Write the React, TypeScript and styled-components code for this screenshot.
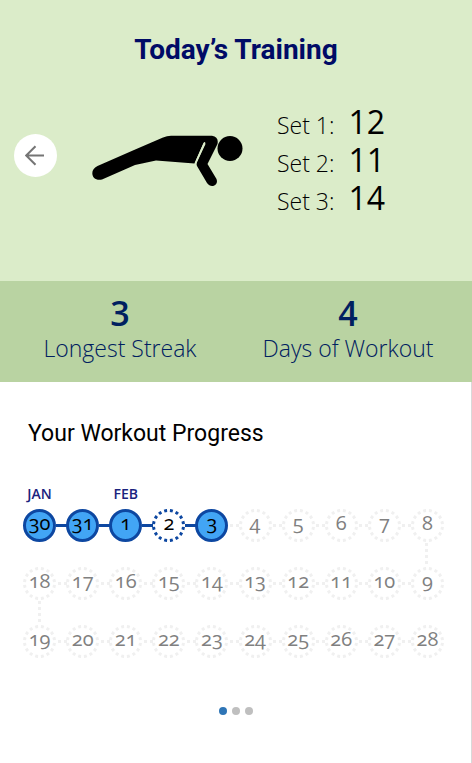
import React from 'react';
import styled, { createGlobalStyle } from 'styled-components';

type DayState = 'done' | 'missed' | 'upcoming';

interface Day {
  label: string;
  state: DayState;
  month?: string;
  next?: 'solid' | 'dotted';
  drop?: boolean;
}

const INK = '#0d47a1';
const FAINT = '#f0f0f0';

const GlobalStyle = createGlobalStyle`
  *, *::before, *::after { box-sizing: border-box; }
  body { margin: 0; background: #fff; color: #000; font-family: Roboto, sans-serif; }
  h1, h2, dl, dd, ol { margin: 0; padding: 0; }
  ol { list-style: none; }
`;

const Page = styled.div`
  display: flex;
  flex-direction: column;
  min-height: 100vh;
`;

const Hero = styled.header`
  padding: 32px 14px 64px;
  background: #dbecc9;
`;

const Title = styled.h1`
  font-size: 28px;
  line-height: 36px;
  font-weight: 700;
  text-align: center;
  color: #000b66;
`;

const Training = styled.div`
  display: flex;
  align-items: center;
  margin-top: 26px;
`;

const BackButton = styled.button`
  display: grid;
  place-items: center;
  flex: none;
  width: 43px;
  height: 43px;
  padding: 0;
  border: 0;
  border-radius: 50%;
  background: #fff;
  color: #757575;
  cursor: pointer;
`;

const Figure = styled.svg`
  margin: 10px 34px 0 35px;
  flex: none;
`;

const Sets = styled.dl`
  display: grid;
  grid-template-columns: auto auto;
  column-gap: 14px;
  grid-auto-rows: 38px;
  align-items: baseline;
  padding-top: 9px;
  font-family: 'Open Sans', sans-serif;
`;

const SetName = styled.dt`
  font-size: 23px;
  line-height: 38px;
  font-weight: 300;
`;

const SetCount = styled.dd`
  font-size: 32px;
  line-height: 38px;
`;

const Stats = styled.dl`
  display: grid;
  grid-template-columns: 1fr 1fr;
  padding: 11px 10px 19px 6px;
  background: #b9d3a2;
  color: #002060;
  font-family: 'Open Sans', sans-serif;
  text-align: center;
`;

const Stat = styled.div`
  display: flex;
  flex-direction: column-reverse;
`;

const StatLabel = styled.dt`
  font-size: 23px;
  line-height: 29px;
  font-weight: 300;
`;

const StatValue = styled.dd`
  font-size: 34px;
  line-height: 42px;
  font-weight: 600;
`;

const Progress = styled.main`
  flex: 1;
  padding: 36px 0 47px;
  border-right: 1px solid #d9d9d9;
`;

const ProgressTitle = styled.h2`
  padding-left: 28px;
  font-size: 23px;
  line-height: 32px;
  font-weight: 400;
`;

const Days = styled.ol`
  display: grid;
  grid-template-columns: repeat(10, 1fr);
  grid-auto-rows: 58px;
  margin: 46px 22px 0 18px;
`;

const Cell = styled.li`
  position: relative;
  display: grid;
  place-items: center;
`;

const Month = styled.span`
  position: absolute;
  top: -10px;
  left: 0;
  right: 0;
  text-align: center;
  font-family: 'Open Sans', sans-serif;
  font-size: 14px;
  line-height: 16px;
  font-weight: 600;
  color: #1a237e;
`;

const Ring = styled.svg`
  grid-area: 1 / 1;
  display: block;
`;

const DayNumber = styled.span<{ $state: DayState }>`
  grid-area: 1 / 1;
  z-index: 1;
  padding-bottom: 4px;
  font-family: 'Open Sans', sans-serif;
  font-variant-numeric: oldstyle-nums;
  font-size: 20px;
  line-height: 28px;
  color: ${(p) => (p.$state === 'upcoming' ? '#808080' : '#000')};
`;

const Link = styled.span<{ $kind: 'solid' | 'dotted' }>`
  position: absolute;
  left: calc(50% + 16px);
  width: calc(100% - 32px);
  top: calc(50% - 1px);
  height: 3px;
  background: ${(p) =>
    p.$kind === 'solid'
      ? INK
      : `repeating-linear-gradient(90deg, transparent 0 2px, ${FAINT} 2px 5px, transparent 5px 6px)`};
`;

const Drop = styled.span`
  position: absolute;
  top: calc(50% + 16px);
  height: calc(100% - 32px);
  left: calc(50% - 2px);
  width: 3px;
  background: repeating-linear-gradient(transparent 0 2px, ${FAINT} 2px 5px, transparent 5px 6px);
`;

const Pager = styled.nav`
  display: flex;
  justify-content: center;
  gap: 5px;
  margin-top: 37px;
`;

const Dot = styled.button<{ $active?: boolean }>`
  width: 8px;
  height: 8px;
  padding: 0;
  border: 0;
  border-radius: 50%;
  background: ${(p) => (p.$active ? '#2e75b6' : '#bfbfbf')};
`;

const done = (label: string, month?: string): Day => ({ label, state: 'done', month, next: 'solid' });
const upcoming = (n: number, last: boolean): Day => ({
  label: String(n),
  state: 'upcoming',
  next: last ? undefined : 'dotted',
  drop: n === 8 || n === 18,
});

const days: Day[] = [
  done('30', 'JAN'),
  done('31'),
  done('1', 'FEB'),
  { label: '2', state: 'missed', next: 'solid' },
  { label: '3', state: 'done', next: 'dotted' },
  ...[4, 5, 6, 7, 8].map((n) => upcoming(n, n === 8)),
  ...[18, 17, 16, 15, 14, 13, 12, 11, 10, 9].map((n) => upcoming(n, n === 9)),
  ...[19, 20, 21, 22, 23, 24, 25, 26, 27, 28].map((n) => upcoming(n, n === 28)),
];

const sets = [12, 11, 14];

function DayCell({ day }: { day: Day }) {
  const solid = day.state === 'done';
  return (
    <Cell>
      {day.month && <Month>{day.month}</Month>}
      {day.next && <Link $kind={day.next} />}
      {day.drop && <Drop />}
      <Ring width="33" height="33" viewBox="0 0 33 33" aria-hidden="true">
        <circle
          cx="16.5"
          cy="16.5"
          r="15"
          fill={solid ? '#42a5f5' : '#fff'}
          stroke={day.state === 'upcoming' ? FAINT : INK}
          strokeWidth="3"
          pathLength={solid ? undefined : 96}
          strokeDasharray={solid ? undefined : '3 3'}
          strokeDashoffset={-1.5}
        />
      </Ring>
      <DayNumber $state={day.state}>{day.label}</DayNumber>
    </Cell>
  );
}

export default function App() {
  return (
    <Page>
      <GlobalStyle />
      <Hero>
        <Title>Today’s Training</Title>
        <Training>
          <BackButton type="button" aria-label="Back">
            <svg width="21" height="21" viewBox="0 0 21 21" fill="none" stroke="currentColor" strokeWidth="2">
              <path d="M19 10.5H1.500M10.500 1.200L1.200 10.500L10.500 19.800" />
            </svg>
          </BackButton>
          <Figure width="151" height="52" viewBox="0 0 151 52" aria-label="Push-up" role="img">
            <path d="M5.5 31L42 15L71 2.5Q75 .8 79 .8H120Q127 2 125.500 9L115.500 29L124.500 44C127 50 119 54 115 48L105 31Q104 28.500 105.500 26L113.500 9Q112.500 7 111.300 8.500L102.500 28.500L64 25.500L43 30L10 44.500C0 47 -3.500 35 5.500 31Z" />
            <path d="M112.500 8L103.600 28" stroke="#dbecc9" strokeWidth="1.8" strokeLinecap="round" />
            <circle cx="138" cy="13.500" r="12.500" />
          </Figure>
          <Sets>
            {sets.map((count, i) => (
              <React.Fragment key={i}>
                <SetName>Set {i + 1}:</SetName>
                <SetCount>{count}</SetCount>
              </React.Fragment>
            ))}
          </Sets>
        </Training>
      </Hero>
      <Stats>
        <Stat>
          <StatLabel>Longest Streak</StatLabel>
          <StatValue>3</StatValue>
        </Stat>
        <Stat>
          <StatLabel>Days of Workout</StatLabel>
          <StatValue>4</StatValue>
        </Stat>
      </Stats>
      <Progress>
        <ProgressTitle>Your Workout Progress</ProgressTitle>
        <Days>
          {days.map((day) => (
            <DayCell key={day.label} day={day} />
          ))}
        </Days>
        <Pager aria-label="Progress pages">
          <Dot type="button" $active aria-label="Page 1" />
          <Dot type="button" aria-label="Page 2" />
          <Dot type="button" aria-label="Page 3" />
        </Pager>
      </Progress>
    </Page>
  );
}
